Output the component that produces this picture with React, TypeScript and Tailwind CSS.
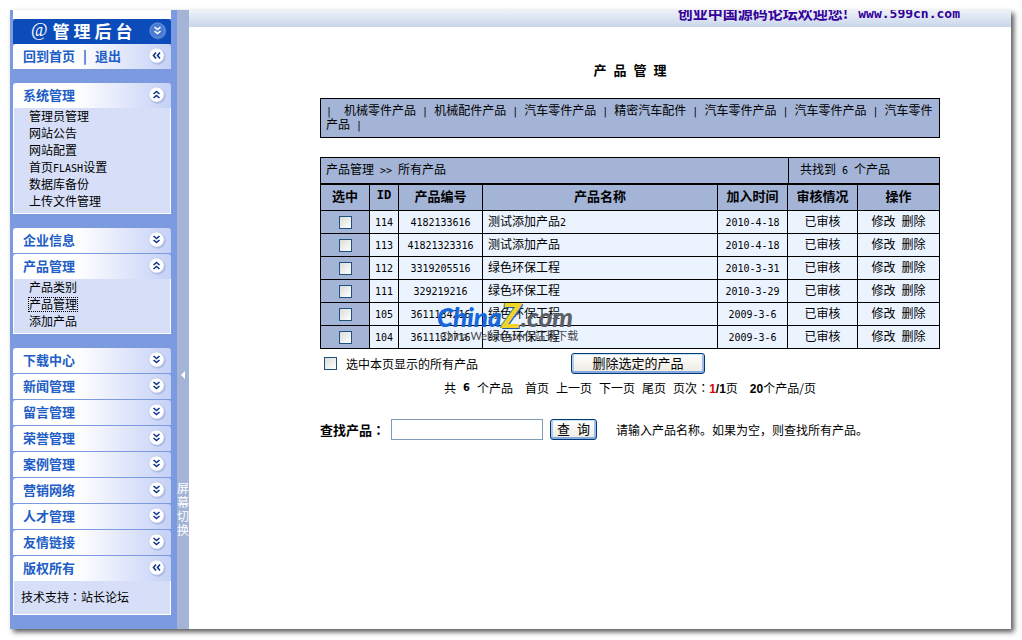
import type { ReactNode } from "react";

type Direction = "down" | "up" | "left";

const arrows: Record<Direction, string> = {
  down: "M5.5 5l3 2.5 3-2.5M5.5 9l3 2.5 3-2.5",
  up: "M5.5 8l3-2.5 3 2.5M5.5 12l3-2.5 3 2.5",
  left: "M8 5.5l-2.5 3 2.5 3M12 5.5l-2.5 3 2.5 3",
};

function Arrow({ dir, dark = false }: { dir: Direction; dark?: boolean }) {
  return (
    <svg viewBox="0 0 18 18" className="size-[18px] shrink-0" aria-hidden="true">
      <circle cx="9.5" cy="9.5" r="8.2" fill={dark ? "#2c62c4" : "#a9b9e2"} />
      <circle cx="8.5" cy="8.5" r="7.6" fill={dark ? "#4a7bd2" : "#ffffff"} stroke={dark ? "#7fa3e2" : "#c3cdea"} strokeWidth="0.8" />
      <path d={arrows[dir]} fill="none" stroke={dark ? "#ffffff" : "#11358c"} strokeWidth="1.6" />
    </svg>
  );
}

function Latin({ children }: { children: ReactNode }) {
  return <span className="font-['DejaVu_Sans_Mono',monospace] text-[10px] leading-none whitespace-pre">{children}</span>;
}

function Colon() {
  return <span className="font-['Noto_Sans_CJK_TC',sans-serif]">：</span>;
}

function MenuHead({ title, dir }: { title: ReactNode; dir: Direction }) {
  return (
    <div className="flex h-[25px] items-center justify-between rounded-t-[3px] bg-linear-to-r from-white from-40% to-[#c5d1f6] pr-[5px] pb-[2px] pl-[10px] text-[13px] font-bold text-[#215dc6]">
      {title}
      <Arrow dir={dir} />
    </div>
  );
}

function MenuButton({ title, dir }: { title: string; dir: Direction }) {
  return (
    <button type="button" className="block w-full text-left">
      <MenuHead title={title} dir={dir} />
    </button>
  );
}

function SubMenu({ items, active }: { items: ReactNode[]; active?: number }) {
  return (
    <ul className="border border-t-0 border-white bg-[#d6dff7] pl-[15px]">
      {items.map((item, i) => (
        <li key={i} className="h-[17px] leading-[15px]">
          <a href="#" className={i === active ? "inline-block h-[13px] leading-[12px] outline-1 outline-dotted outline-black" : ""}>
            {item}
          </a>
        </li>
      ))}
      <li className="h-[3px]" aria-hidden="true" />
    </ul>
  );
}

const modules = ["下载中心", "新闻管理", "留言管理", "荣誉管理", "案例管理", "营销网络", "人才管理", "友情链接"];

function Sidebar() {
  return (
    <aside className="w-[167px] shrink-0 bg-[#7b9ae0] pr-[6px] pb-[14px] pl-[3px]">
      <div className="h-[9px] bg-white" />
      <div className="flex h-[25px] items-center rounded-t-[3px] bg-[#0c4cba] pr-[4px] pb-[2px] pl-[18px] text-white">
        <span className="font-['Liberation_Serif',serif] text-[18px]">@</span>
        <span className="ml-[5px] flex grow gap-[4px] text-[17px] font-bold">
          <span>管</span>
          <span>理</span>
          <span>后</span>
          <span>台</span>
        </span>
        <Arrow dir="down" dark />
      </div>
      <MenuHead
        dir="left"
        title={
          <span className="flex gap-[8px]">
            <a href="#">回到首页</a>
            <span>|</span>
            <a href="#">退出</a>
          </span>
        }
      />

      <div className="mt-[14px]">
        <MenuButton title="系统管理" dir="up" />
        <SubMenu
          items={["管理员管理", "网站公告", "网站配置", <>首页<Latin>FLASH</Latin>设置</>, "数据库备份", "上传文件管理"]}
        />
      </div>

      <div className="mt-[14px] flex flex-col gap-px">
        <MenuButton title="企业信息" dir="down" />
        <div>
          <MenuButton title="产品管理" dir="up" />
          <SubMenu items={["产品类别", "产品管理", "添加产品"]} active={1} />
        </div>
      </div>

      <div className="mt-[14px] flex flex-col gap-px">
        {modules.map((m) => (
          <MenuButton key={m} title={m} dir="down" />
        ))}
        <div>
          <MenuButton title="版权所有" dir="left" />
          <p className="border border-t-0 border-white bg-[#d6dff7] pt-[6px] pb-[8px] pl-[7px] leading-[19px]">
            技术支持<Colon />站长论坛
          </p>
        </div>
      </div>
    </aside>
  );
}

const categories = ["机械零件产品", "机械配件产品", "汽车零件产品", "精密汽车配件", "汽车零件产品", "汽车零件产品", "汽车零件产品"];

const products = [
  { id: "114", code: "4182133616", name: "测试添加产品", suffix: "2", date: "2010-4-18" },
  { id: "113", code: "41821323316", name: "测试添加产品", suffix: "", date: "2010-4-18" },
  { id: "112", code: "3319205516", name: "绿色环保工程", suffix: "", date: "2010-3-31" },
  { id: "111", code: "329219216", name: "绿色环保工程", suffix: "", date: "2010-3-29" },
  { id: "105", code: "3611134216", name: "绿色环保工程", suffix: "", date: "2009-3-6" },
  { id: "104", code: "3611132716", name: "绿色环保工程", suffix: "", date: "2009-3-6" },
];

const headings = ["选中", "ID", "产品编号", "产品名称", "加入时间", "审核情况", "操作"];

const checkbox =
  "block size-[13px] appearance-none border border-[#1c5180] bg-linear-to-br from-[#dcdcd7] to-white checked:bg-[#21a121]";
const button =
  "h-[21px] rounded-[3px] border border-[#003c74] bg-linear-to-b from-white to-[#eceae0] pb-[2px] text-[13px] leading-[17px] shadow-[inset_0_-2px_0_#88a8e2,inset_0_1px_0_#cee0fb,inset_2px_0_0_#b3cbf3,inset_-2px_0_0_#a0bbeb]";

function Watermark() {
  return (
    <div className="pointer-events-none absolute top-[145px] left-[117px] whitespace-nowrap" aria-hidden="true">
      <div className="flex h-[28px] items-end font-['Lato',sans-serif] text-[26px] leading-[26px] font-black italic">
        <span className="text-[#1767dc]">China</span>
        <span className="text-[34px] leading-[30px] text-[#f1d32b] [text-shadow:1px_1px_0_#1b5dab,-1px_0_0_#3a7fc0]">Z</span>
        <span className="text-[#5c6066]">.com</span>
      </div>
      <div className="pl-[3px] font-['Lato','Noto_Sans_CJK_SC',sans-serif] text-[11px] leading-[12px] text-[#4b4f55]">
        China Webmaster | 站长下载
      </div>
    </div>
  );
}

function Main() {
  return (
    <main className="min-w-0 grow bg-white">
      <div className="flex h-[17px] items-start justify-end gap-[10px] overflow-hidden bg-linear-to-b from-[#eef2f9] to-[#c9d6ea] pr-[51px] text-[15px] leading-[5px] font-bold whitespace-nowrap text-[#330099]">
        <span>创业中国源码论坛欢迎您!</span>
        <span className="pt-px font-['DejaVu_Sans_Mono',monospace] text-[13px]">www.599cn.com</span>
      </div>

      <div className="pl-[60px]">
        <div className="mx-auto w-full max-w-[620px]">
          <h1 className="mt-[33px] flex justify-center gap-[7px] text-[13px] leading-[20px] font-bold">
            <span>产</span>
            <span>品</span>
            <span>管</span>
            <span>理</span>
          </h1>

          <nav className="mt-[18px] border border-black bg-[#a3b4d6] px-[5px] pt-[4px] pb-[6px] leading-[14px]">
            <Latin>{"|  "}</Latin>
            {categories.map((c, i) => (
              <span key={i}>
                <a href="#">{c}</a>
                <span className="font-['DejaVu_Sans_Mono',monospace] text-[10px] leading-none"> | </span>
              </span>
            ))}
          </nav>

          <div className="relative mt-[19px]">
            <div className="flex h-[26px] border border-b-0 border-black bg-[#a3b4d6] leading-[22px]">
              <div className="grow pl-[5px]">
                产品管理<Latin>{" >> "}</Latin>所有产品
              </div>
              <div className="w-[151px] border-l border-black pl-[11px]">
                共找到<Latin>{" 6 "}</Latin>个产品
              </div>
            </div>
            <table className="w-full table-fixed border-collapse border border-t-2 border-black text-center [&_td]:border [&_td]:border-black [&_td]:px-0 [&_td]:pt-0 [&_td]:pb-[2px] [&_th]:border [&_th]:border-t-2 [&_th]:border-black [&_th]:px-0 [&_th]:pt-0 [&_th]:pb-[2px]">
              <colgroup>
                <col className="w-[49px]" />
                <col className="w-[29px]" />
                <col className="w-[84px]" />
                <col />
                <col className="w-[70px]" />
                <col className="w-[70px]" />
                <col className="w-[82px]" />
              </colgroup>
              <thead>
                <tr className="h-[26px] bg-[#a3b4d6] text-[13px] leading-[20px]">
                  {headings.map((h) => (
                    <th key={h} scope="col" className={h === "ID" ? "font-['Liberation_Mono',monospace] text-[12px]" : ""}>
                      {h}
                    </th>
                  ))}
                </tr>
              </thead>
              <tbody>
                {products.map((p) => (
                  <tr key={p.id} className="h-[23px] bg-[#ebf3ff] leading-[20px]">
                    <td className="bg-[#a3b4d6]">
                      <input type="checkbox" aria-label={p.id} className={`${checkbox} mx-auto mt-[4px]`} />
                    </td>
                    <td><Latin>{p.id}</Latin></td>
                    <td><Latin>{p.code}</Latin></td>
                    <td className="text-left">
                      <span className="pl-[5px]">{p.name}<Latin>{p.suffix}</Latin></span>
                    </td>
                    <td><Latin>{p.date}</Latin></td>
                    <td>已审核</td>
                    <td>
                      <a href="#">修改</a><Latin> </Latin><a href="#">删除</a>
                    </td>
                  </tr>
                ))}
              </tbody>
            </table>
            <Watermark />
          </div>

          <div className="mt-[4px] flex items-center pl-[4px]">
            <label className="flex w-[247px] items-center gap-[9px]">
              <input type="checkbox" className={checkbox} />
              选中本页显示的所有产品
            </label>
            <button type="button" className={`${button} w-[134px]`}>删除选定的产品</button>
          </div>

          <div className="mt-[4px] flex justify-center gap-[7px] leading-[20px]">
            <span>共</span>
            <b className="font-['DejaVu_Sans',sans-serif] text-[10px]">6</b>
            <span className="mr-[5px]">个产品</span>
            <a href="#">首页</a>
            <a href="#">上一页</a>
            <a href="#">下一页</a>
            <a href="#">尾页</a>
            <span className="mr-[5px]">
              页次<Colon />
              <b className="font-['Liberation_Sans',sans-serif]">
                <span className="text-[#e00000]">1</span>/1
              </b>
              页
            </span>
            <span>
              <b className="font-['Liberation_Sans',sans-serif]">20</b>个产品/页
            </span>
          </div>

          <form className="mt-[18px] flex items-center" onSubmit={(e) => e.preventDefault()}>
            <label htmlFor="keyword" className="w-[71px] text-[13px] font-bold whitespace-nowrap">查找产品<Colon /></label>
            <input id="keyword" type="text" className="h-[21px] w-[152px] border border-[#7f9db9] bg-white px-[3px] outline-none" />
            <button type="submit" className={`${button} ml-[7px] flex w-[47px] justify-center gap-[7px]`}>
              <span>查</span>
              <span>询</span>
            </button>
            <span className="ml-[19px] leading-[26px]">请输入产品名称。如果为空，则查找所有产品。</span>
          </form>
        </div>
      </div>
    </main>
  );
}

export default function App() {
  return (
    <div className="min-h-screen bg-white p-[10px] pr-[11px] font-['Noto_Sans_CJK_SC',sans-serif] text-[12px] leading-[17px] text-black">
      <div className="flex shadow-[3px_3px_5px_rgba(0,0,0,0.65)]">
        <Sidebar />
        <button type="button" aria-label="屏幕切换" className="flex w-[12px] shrink-0 flex-col items-center bg-[#a3b4d6] text-white">
          <svg viewBox="0 0 4 8" className="mt-[361px] h-[8px] w-[4px]" aria-hidden="true">
            <path d="M4 0v8L0 4z" fill="#fff" />
          </svg>
          <span className="mt-[102px] w-[12px] leading-[14px]">屏幕切换</span>
        </button>
        <Main />
      </div>
    </div>
  );
}
